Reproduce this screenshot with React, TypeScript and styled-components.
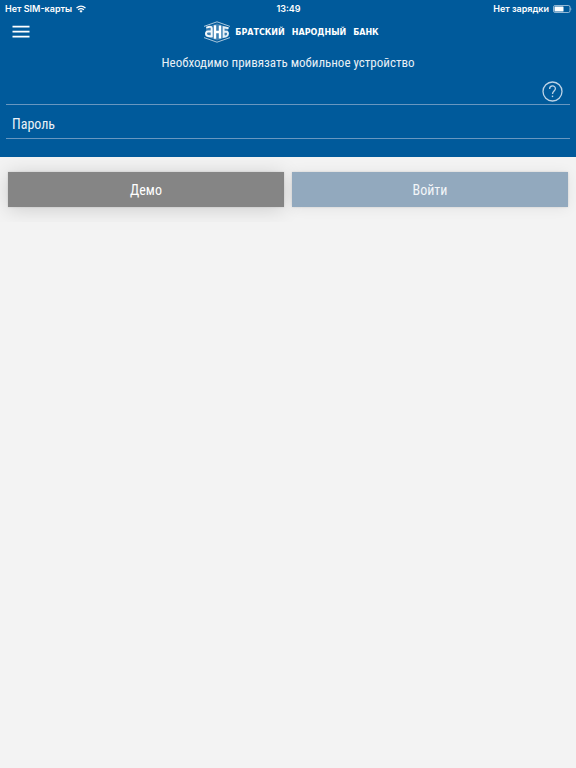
import React from "react";
import styled, { createGlobalStyle } from "styled-components";

const GlobalStyle = createGlobalStyle`
  *, *::before, *::after { box-sizing: border-box; }
  body {
    margin: 0;
    background: #f3f3f3;
    font-family: "Roboto Condensed", Roboto, sans-serif;
  }
  button, input { font: inherit; }
`;

const Header = styled.header`
  background: #005a9b;
  color: #fff;
  padding-bottom: 18px;
`;

const StatusBar = styled.div`
  display: grid;
  grid-template-columns: 1fr auto 1fr;
  align-items: center;
  height: 17px;
  padding: 0 4px 0 5px;
  font: 600 9px/17px Inter, sans-serif;
`;

const StatusGroup = styled.div<{ $end?: boolean }>`
  display: flex;
  align-items: center;
  justify-content: ${(p) => (p.$end ? "flex-end" : "flex-start")};
  gap: 4px;
`;

const NavBar = styled.div`
  display: grid;
  grid-template-columns: 36px 1fr 30px;
  align-items: center;
  height: 30px;
`;

const MenuButton = styled.button`
  display: flex;
  justify-content: flex-end;
  padding: 0 6px 0 0;
  border: 0;
  background: none;
  color: inherit;
`;

const Brand = styled.div`
  display: flex;
  align-items: center;
  justify-content: center;
  gap: 4px;
`;

const BrandName = styled.div`
  display: flex;
  gap: 7px;
  padding-top: 2px;
  font: bold 8px/14px "DejaVu Sans", sans-serif;
`;

const Title = styled.h1`
  margin: 0;
  padding: 7px 0 6px;
  font-size: 13px;
  font-weight: 400;
  line-height: 18px;
  text-align: center;
  color: #e8f0f6;
`;

const Form = styled.form`
  margin: 0;
`;

const Field = styled.div`
  display: flex;
  align-items: center;
  margin: 0 6px;
  padding: 0 7px 0 6px;
  border-bottom: 1px solid #6897c0;
`;

const Input = styled.input<{ $height: number }>`
  flex: 1;
  min-width: 0;
  height: ${(p) => p.$height}px;
  padding: 4px 0 0;
  border: 0;
  outline: 0;
  background: none;
  color: #fff;
  font-size: 14px;
  &::placeholder { color: #fff; opacity: 0.92; }
`;

const HelpButton = styled.button`
  display: flex;
  padding: 0;
  border: 0;
  background: none;
  color: #bdd3e6;
`;

const Actions = styled.div`
  display: grid;
  grid-template-columns: 1fr 1fr;
  gap: 8px;
  padding: 15px 8px;
`;

const ActionButton = styled.button<{ $tone: "grey" | "blue" }>`
  height: 35px;
  padding: 0;
  border: 0;
  color: ${(p) => (p.$tone === "grey" ? "#fff" : "#f3f6f9")};
  font-size: 14px;
  background: ${(p) => (p.$tone === "grey" ? "#858585" : "#92a9be")};
  box-shadow: ${(p) =>
    p.$tone === "grey"
      ? "0 0 2px rgba(0,0,0,.14), 0 2px 20px rgba(0,0,0,.16)"
      : "0 0 2px rgba(0,0,0,.12), 0 1px 14px rgba(0,0,0,.07)"};
`;

const WifiIcon = () => (
  <svg width="10" height="8" viewBox="0 0 10 8" fill="none" stroke="#fff" strokeWidth="1.2" aria-hidden="true">
    <path d="M.5 3Q5-.9 9.5 3M2.1 4.8Q5 2.3 7.9 4.8" />
    <path d="M3.4 6Q5 4.7 6.6 6L5 7.7Z" fill="#fff" stroke="none" />
  </svg>
);

const BatteryIcon = () => (
  <svg width="19" height="8" viewBox="0 0 19 8" aria-hidden="true">
    <rect x=".5" y=".5" width="16.5" height="7" rx="1.6" fill="none" stroke="#b8d0e4" strokeWidth=".8" />
    <rect x="1.5" y="1.5" width="9" height="5" rx=".5" fill="#fff" />
    <path d="M17.7 2.6Q19 4 17.7 5.4Z" fill="#dce8f2" />
  </svg>
);

const MenuIcon = () => (
  <svg width="18" height="14" viewBox="0 0 18 14" stroke="#fff" strokeWidth="1.7" aria-hidden="true">
    <path d="M.5 1.6H17.5M.5 6.6H17.5M.5 11.7H17.5" />
  </svg>
);

const BankLogo = () => (
  <svg width="28" height="22" viewBox="0 0 28 22" fill="none" aria-hidden="true">
    <path d="M1 5.4L14 .8L27 5.4M1 16.6L14 21.2L27 16.6" stroke="#a9c6dc" strokeWidth="1" />
    <path d="M3 6.4L14 2.6L25 6.4V15.6L14 19.4L3 15.6Z" fill="#3d80b3" />
    <path d="M3.2 6.6L6.4 5.8Q8.7 5.4 8.7 7.6V16.2M8.7 10.2L5 10.4Q3 10.6 3 12.6Q3 14.8 5 15L8.7 15.4" stroke="#f3f7fa" strokeWidth="2" />
    <path d="M12 4.2V17.8M17 4.6V17.4M12 11H17" stroke="#fff" strokeWidth="2.4" />
    <path d="M25.6 7.2L20.6 6.2V15.8L23.4 15.2Q25 14.8 25 12.8Q25 10.8 23.4 10.7L20.6 10.6" stroke="#e7f0f6" strokeWidth="1.9" />
  </svg>
);

const HelpIcon = () => (
  <svg width="21" height="21" viewBox="0 0 21 21" fill="none" stroke="currentColor" aria-hidden="true">
    <circle cx="10.5" cy="10.5" r="9.5" strokeWidth="1.3" />
    <path d="M7.6 8C7.6 4 13.4 4 13.4 7.7C13.4 9.9 10.5 10.3 10.5 13" strokeWidth="1.3" />
    <path d="M10.5 14.6V16.1" strokeWidth="1.4" />
  </svg>
);

export default function App() {
  return (
    <>
      <GlobalStyle />
      <Header>
        <StatusBar>
          <StatusGroup>
            <span>Нет SIM-карты</span>
            <WifiIcon />
          </StatusGroup>
          <span>13:49</span>
          <StatusGroup $end>
            <span>Нет зарядки</span>
            <BatteryIcon />
          </StatusGroup>
        </StatusBar>
        <NavBar>
          <MenuButton type="button" aria-label="Меню">
            <MenuIcon />
          </MenuButton>
          <Brand>
            <BankLogo />
            <BrandName>
              <span>БРАТСКИЙ</span>
              <span>НАРОДНЫЙ</span>
              <span>БАНК</span>
            </BrandName>
          </Brand>
        </NavBar>
        <Title>Необходимо привязать мобильное устройство</Title>
        <Form id="login">
          <Field>
            <Input $height={26} type="text" aria-label="Логин" />
            <HelpButton type="button" aria-label="Помощь">
              <HelpIcon />
            </HelpButton>
          </Field>
          <Field>
            <Input $height={33} type="password" aria-label="Пароль" placeholder="Пароль" />
          </Field>
        </Form>
      </Header>
      <Actions>
        <ActionButton type="button" $tone="grey">Демо</ActionButton>
        <ActionButton type="submit" form="login" $tone="blue">Войти</ActionButton>
      </Actions>
    </>
  );
}
